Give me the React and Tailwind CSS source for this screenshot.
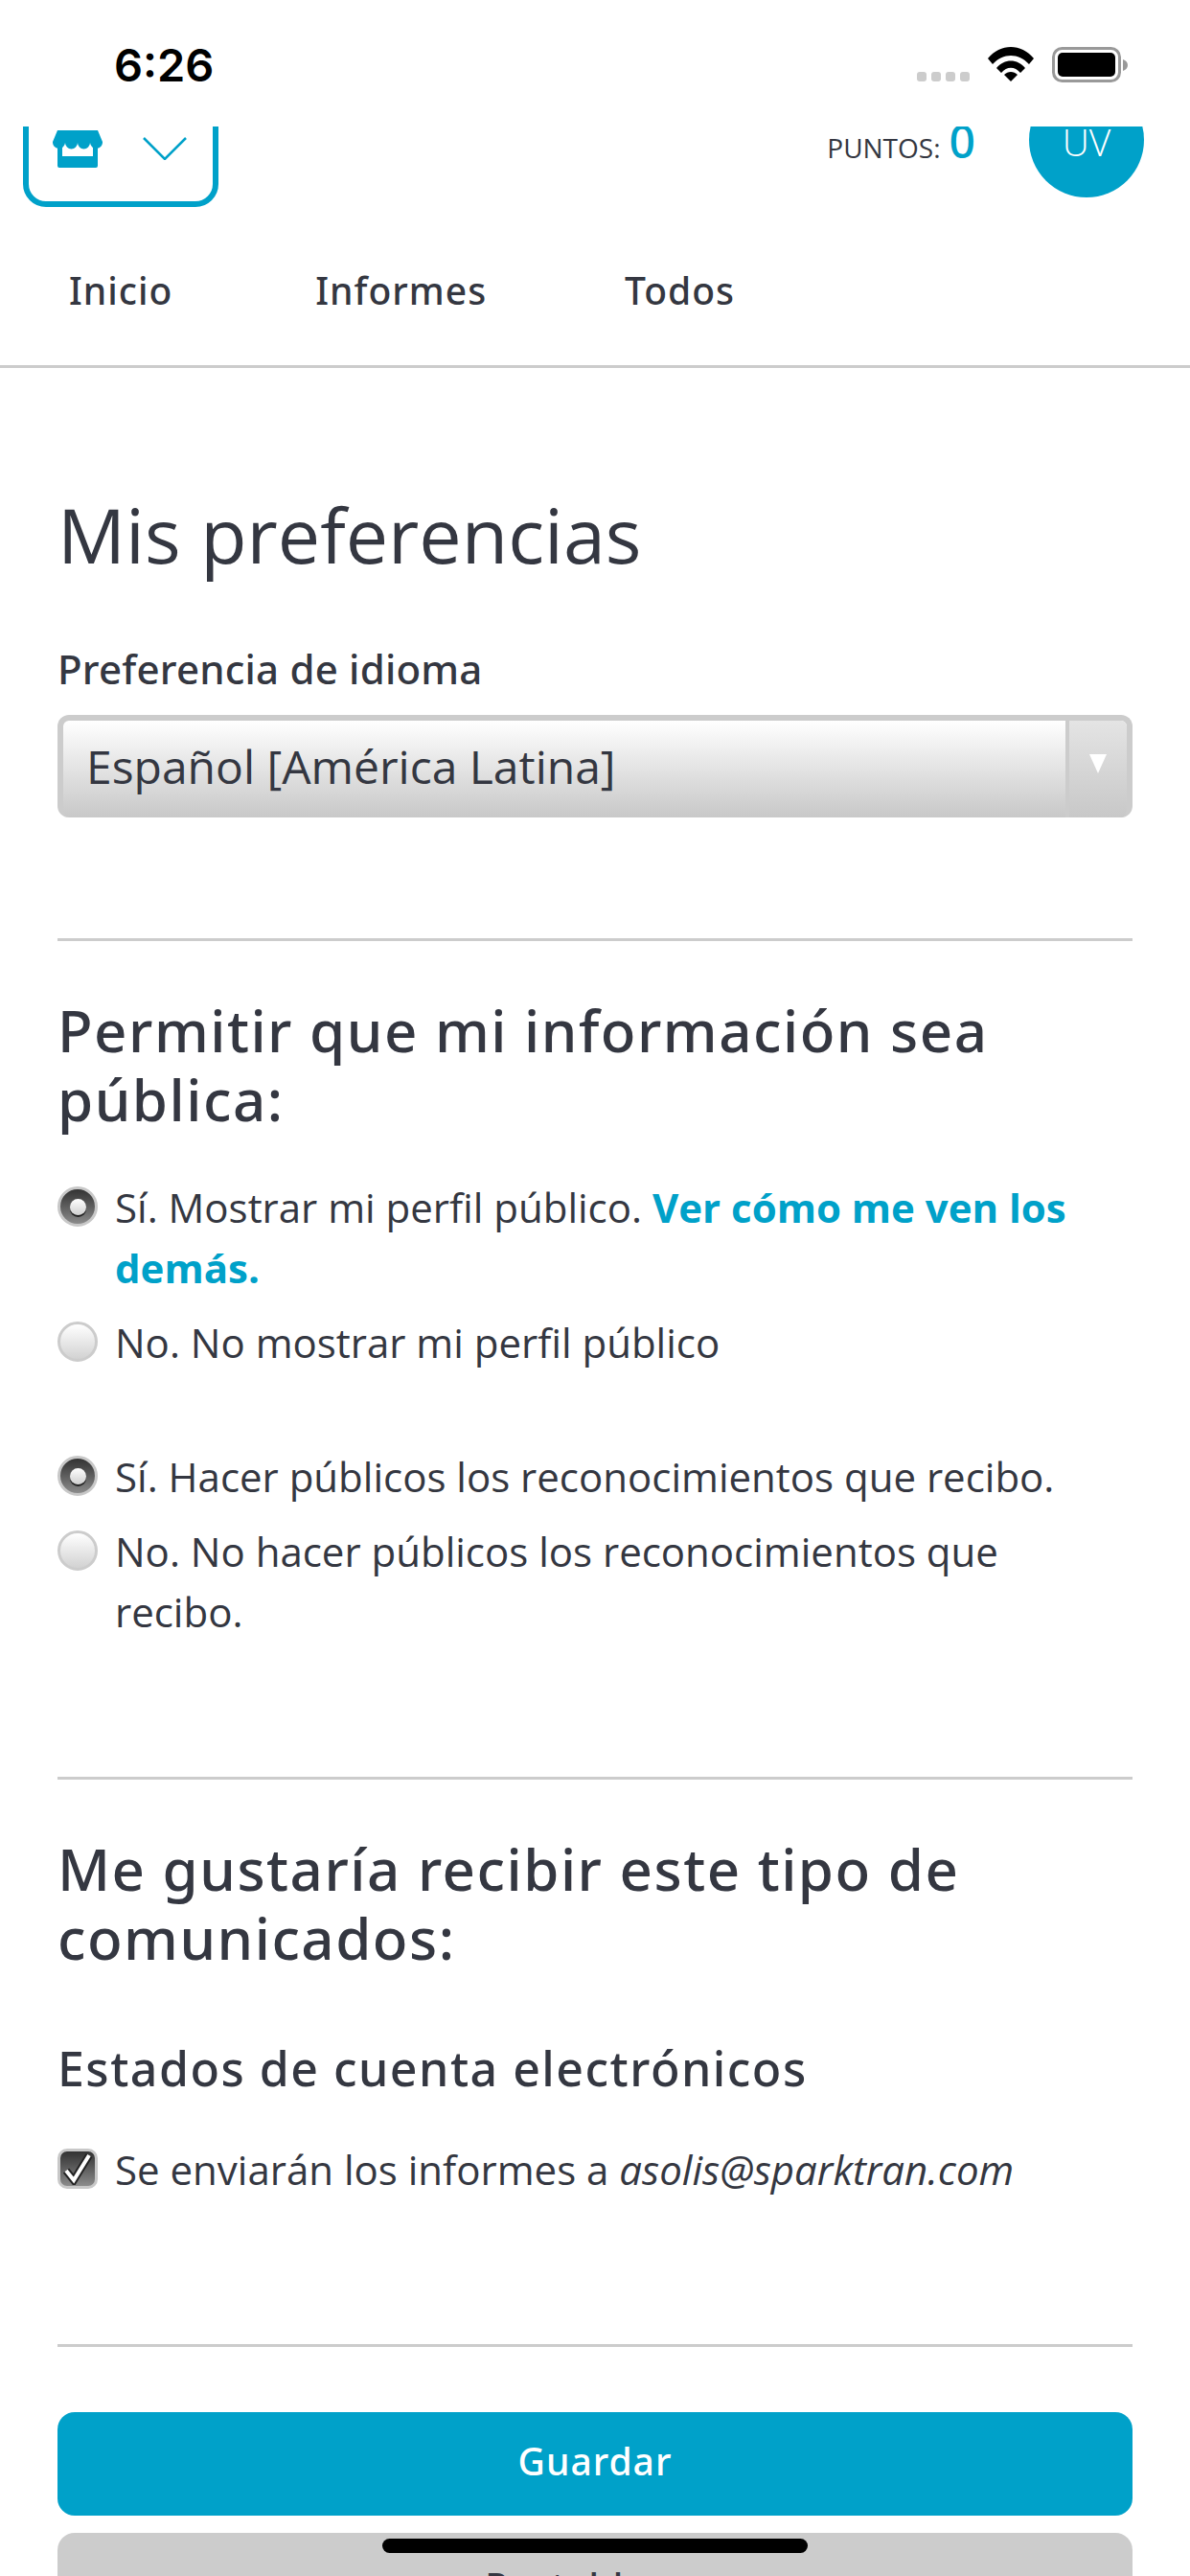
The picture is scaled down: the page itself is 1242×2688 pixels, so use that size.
const Radio = ({ on }) => (
  <span
    className={
      on
        ? "mt-[10px] flex h-[42px] w-[42px] shrink-0 items-center justify-center rounded-full border-[3px] border-[#c8c8c8] bg-gradient-to-b from-[#333333] to-[#8c8c8c]"
        : "mt-[10px] block h-[42px] w-[42px] shrink-0 rounded-full border-[3px] border-[#cccccc] bg-gradient-to-b from-[#ffffff] to-[#d2d2d2]"
    }
  >
    {on && (
      <span className="block h-[17px] w-[17px] rounded-full bg-gradient-to-b from-[#ffffff] to-[#d0d0d0] shadow-[0_2px_0_#222222]" />
    )}
  </span>
);

const Option = ({ on, children, className = "" }) => (
  <div className={"flex gap-[18px] " + className}>
    <Radio on={on} />
    <p className="text-[42px] leading-[63px] text-[#343741]">{children}</p>
  </div>
);

export default function App() {
  return (
    <div className="flex h-[2688px] w-[1242px] flex-col overflow-hidden bg-white font-['Open_Sans',sans-serif] text-[#343741]">
      {/* status bar */}
      <div className="flex h-[132px] shrink-0 items-start justify-between pl-[119px] pr-[65px] pt-[40px]">
        <span className="font-['Inter',sans-serif] text-[47px] font-semibold leading-[56px] text-black">6:26</span>
        <div className="flex items-start pt-[9px]">
          <div className="mr-[19px] mt-[26px] flex gap-[5px]">
            <span className="h-[10px] w-[10px] rounded-[3px] bg-[#cccccc]" />
            <span className="h-[10px] w-[10px] rounded-[3px] bg-[#cccccc]" />
            <span className="h-[10px] w-[10px] rounded-[3px] bg-[#cccccc]" />
            <span className="h-[10px] w-[10px] rounded-[3px] bg-[#cccccc]" />
          </div>
          <svg width="48" height="36" viewBox="0 0 48 36" className="mr-[19px]">
            <path d="M0 12 C13 -4 35 -4 48 12 L43 18 C32 6 16 6 5 18 Z" fill="black" />
            <path d="M9 22 C17 12 31 12 39 22 L34 27 C28 20 20 20 14 27 Z" fill="black" />
            <path d="M17 29 C21 25 27 25 31 29 L24 36 Z" fill="black" />
          </svg>
          <svg width="79" height="38" viewBox="0 0 79 38">
            <rect x="1.5" y="1.5" width="69" height="34" rx="9" fill="none" stroke="#999999" strokeWidth="3" />
            <rect x="6" y="6" width="60" height="25" rx="5" fill="black" />
            <path d="M74 13 C77 14 79 16 79 19 C79 22 77 24 74 25 Z" fill="#999999" />
          </svg>
        </div>
      </div>

      {/* header */}
      <header className="h-[252px] shrink-0 overflow-hidden border-b-[3px] border-[#cccccc]">
        <div className="flex items-start justify-between pl-[24px] pr-[48px]">
          <div className="-mt-[60px] flex h-[144px] w-[204px] items-start rounded-[24px] border-[6px] border-[#00a1c9] pl-[25px] pt-[58px]">
            <svg width="52" height="39" viewBox="0 0 52 39">
              <path d="M5 0 H47 L52 12 A6.5 6.5 0 0 1 39 13 A6.5 6.5 0 0 1 26 13 A6.5 6.5 0 0 1 13 13 A6.5 6.5 0 0 1 0 12 Z" fill="#00a1c9" />
              <path d="M5 17 H10 V27 H42 V17 H47 V37 Q47 39 45 39 H7 Q5 39 5 37 Z" fill="#00a1c9" />
            </svg>
            <svg width="46" height="24" viewBox="0 0 46 24" className="ml-[42px] mt-[7px]">
              <path d="M1 1 L23 23 L45 1" fill="none" stroke="#00a1c9" strokeWidth="2.5" />
            </svg>
          </div>
          <div className="flex items-start">
            <p className="mr-[56px] flex items-baseline gap-[9px] text-[28px] leading-[30px]">
              <span>PUNTOS:</span>
              <span className="font-['Noto_Sans',sans-serif] text-[48px] font-medium leading-[30px] text-[#00a1c9]">0</span>
            </p>
            <div className="-mt-[46px] flex h-[120px] w-[120px] items-start justify-center rounded-full bg-[#00a1c9] pt-[38px] text-[39px] font-light leading-[48px] text-white">
              UV
            </div>
          </div>
        </div>
        <nav className="mt-[63px] flex pl-[72px] font-['Noto_Sans',sans-serif] text-[39px] font-medium leading-[48px] tracking-[1px]">
          <span className="mr-[149px]">Inicio</span>
          <span className="mr-[144px]">Informes</span>
          <span>Todos</span>
        </nav>
      </header>

      {/* content */}
      <main className="flex flex-col px-[60px]">
        <h1 className="mt-[124px] text-[79px] leading-[100px]">Mis preferencias</h1>
        <label className="mt-[64px] block font-['Noto_Sans',sans-serif] text-[42px] font-medium leading-[52px] tracking-[0.2px]">Preferencia de idioma</label>
        <div className="mt-[22px] flex h-[107px] overflow-hidden rounded-[12px] border-[6px] border-b-0 border-[#cccccc] bg-gradient-to-b from-[#ffffff] to-[#c8c8c8]">
          <span className="flex-1 pl-[24px] text-[48px] leading-[95px]">Español [América Latina]</span>
          <span className="flex w-[64px] justify-center border-l-[4px] border-[#cccccc] bg-gradient-to-b from-[#e4e4e4] to-[#c8c8c8] pt-[35px]">
            <svg width="18" height="20" viewBox="0 0 18 20">
              <path d="M0 0 H18 L9 20 Z" fill="white" />
            </svg>
          </span>
        </div>

        <hr className="mt-[126px] border-t-[3px] border-[#cccccc]" />
        <h2 className="mt-[57px] font-['Noto_Sans',sans-serif] text-[60px] font-medium leading-[72px] tracking-[1.5px]">
          Permitir que mi información sea pública:
        </h2>

        <Option on className="mt-[45px]">
          Sí. Mostrar mi perfil público. <a className="font-bold text-[#00a1c9]">Ver cómo me ven los demás.</a>
        </Option>
        <Option className="mt-[15px]">No. No mostrar mi perfil público</Option>
        <Option on className="mt-[77px]">Sí. Hacer públicos los reconocimientos que recibo.</Option>
        <Option className="mt-[15px]">No. No hacer públicos los reconocimientos que recibo.</Option>

        <hr className="mt-[141px] border-t-[3px] border-[#cccccc]" />
        <h2 className="mt-[57px] font-['Noto_Sans',sans-serif] text-[60px] font-medium leading-[72px] tracking-[1.5px]">
          Me gustaría recibir este tipo de comunicados:
        </h2>
        <h3 className="mt-[67px] font-['Noto_Sans',sans-serif] text-[50px] font-medium leading-[66px] tracking-[1.5px]">Estados de cuenta electrónicos</h3>
        <div className="mt-[41px] flex gap-[18px]">
          <span className="mt-[10px] flex h-[42px] w-[42px] shrink-0 items-center justify-center rounded-[10px] border-[3px] border-[#c8c8c8] bg-gradient-to-b from-[#333333] to-[#8c8c8c]">
            <svg width="32" height="34" viewBox="0 0 32 34">
              <path d="M4 19 L12 29 L28 3" fill="none" stroke="#222222" strokeWidth="8" />
              <path d="M4 19 L12 29 L28 3" fill="none" stroke="white" strokeWidth="4" />
            </svg>
          </span>
          <p className="text-[42px] leading-[63px]">
            Se enviarán los informes a <em>asolis@sparktran.com</em>
          </p>
        </div>

        <hr className="mt-[151px] border-t-[3px] border-[#cccccc]" />
        <button className="mt-[68px] h-[108px] shrink-0 rounded-[18px] bg-[#00a1c9] pb-[6px] text-center font-['Noto_Sans',sans-serif] text-[39px] font-medium tracking-[1px] text-white">
          Guardar
        </button>
        <button className="mt-[18px] h-[108px] shrink-0 rounded-[18px] bg-[#cccccc] pt-[4px] text-center font-['Noto_Sans',sans-serif] text-[39px] font-medium tracking-[1px] text-[#343741]">
          Restablecer
        </button>
      </main>

      {/* home indicator */}
      <div className="absolute left-[399px] top-[2649px] h-[15px] w-[444px] rounded-full bg-black" />
    </div>
  );
}
